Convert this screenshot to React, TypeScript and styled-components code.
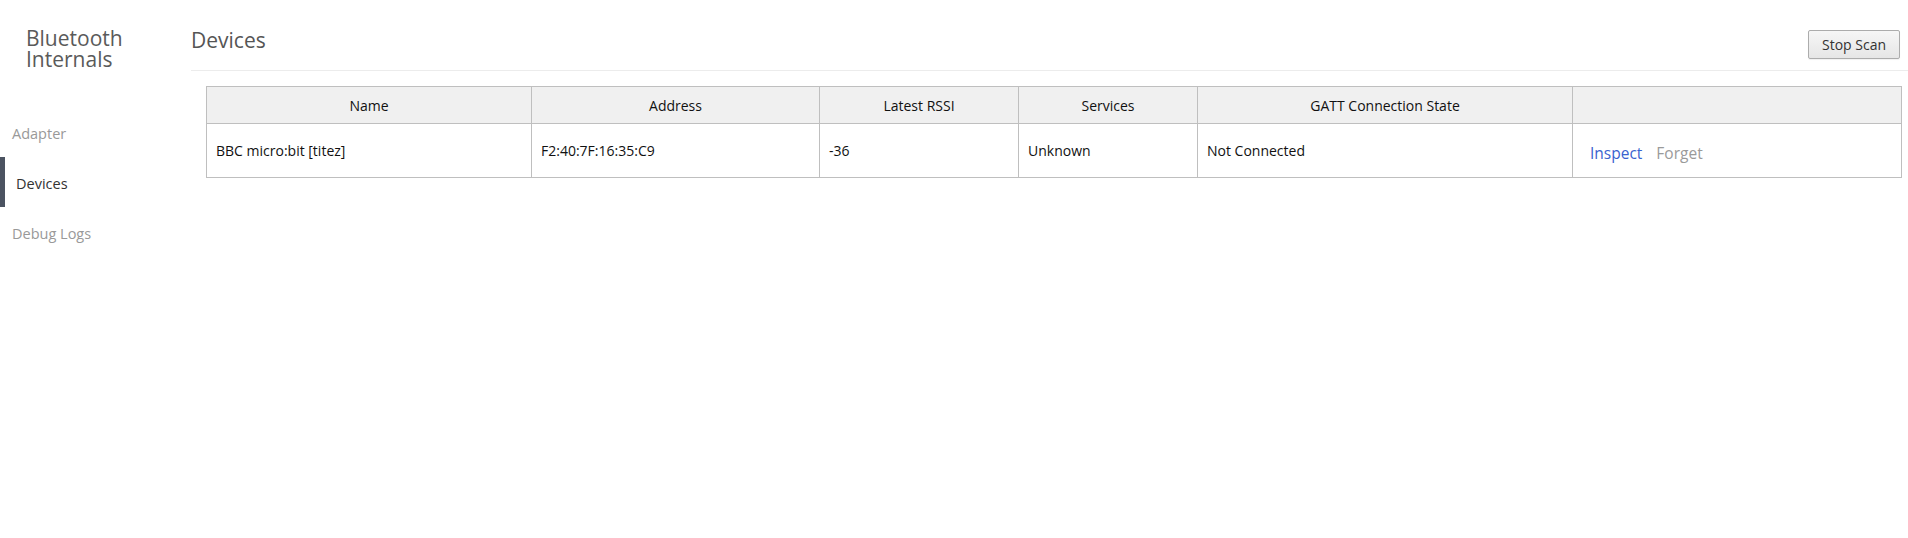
import { createGlobalStyle } from 'styled-components';
import styled from 'styled-components';

const GlobalStyle = createGlobalStyle`
  html, body {
    margin: 0;
    padding: 0;
    background: #fff;
    font-family: "Open Sans", "Noto Sans", sans-serif;
  }
`;

const Page = styled.div`
  display: flex;
  min-height: 538px;
`;

const Sidebar = styled.nav`
  width: 191px;
  flex-shrink: 0;
  padding-top: 28px;
  box-sizing: border-box;
`;

const AppTitle = styled.h1`
  margin: 0 0 37px 0;
  padding-left: 26px;
  font-size: 21px;
  font-weight: 400;
  line-height: 21px;
  color: #5a5a5a;
`;

const NavList = styled.ul`
  list-style: none;
  margin: 0;
  padding: 0;
`;

const NavItem = styled.li<{ $active?: boolean }>`
  height: 50px;
  padding-top: 4px;
  line-height: 46px;
  font-size: 14.5px;
  box-sizing: border-box;
  padding-left: ${(p) => (p.$active ? '11px' : '12px')};
  border-left: ${(p) => (p.$active ? '5px solid #4b5361' : 'none')};
  color: ${(p) => (p.$active ? '#333' : '#999')};
  cursor: pointer;
`;

const Main = styled.main`
  flex: 1;
  min-width: 0;
`;

const Header = styled.header`
  display: flex;
  justify-content: space-between;
  align-items: flex-start;
  height: 70px;
  padding-right: 8px;
  border-bottom: 1px solid #ececec;
`;

const PageTitle = styled.h2`
  margin: 0;
  padding-top: 26px;
  font-size: 21px;
  font-weight: 400;
  line-height: 28px;
  color: #555;
`;

const ScanButton = styled.button`
  margin-top: 30px;
  width: 92px;
  height: 29px;
  padding: 0;
  font-family: inherit;
  font-size: 14px;
  color: #333;
  background: linear-gradient(#f6f6f6, #e6e6e6);
  border: 1px solid #acacac;
  border-radius: 2px;
  box-shadow: 0 1px 1px rgba(0, 0, 0, 0.06);
  cursor: pointer;
`;

const Table = styled.table`
  margin: 15px 7px 0 15px;
  width: calc(100% - 22px);
  border-collapse: collapse;
  table-layout: fixed;
  border: 1px solid #bfbfbf;
  font-size: 14px;
  color: #111;
`;

const Th = styled.th`
  height: 36px;
  padding: 0 9px;
  background: #f0f0f0;
  border: 1px solid #bfbfbf;
  font-weight: 400;
  text-align: center;
`;

const Td = styled.td`
  height: 53px;
  padding: 0 9px;
  border: 1px solid #bfbfbf;
  text-align: left;
  vertical-align: middle;
`;

const ActionLink = styled.a<{ $muted?: boolean }>`
  display: inline-block;
  margin-left: ${(p) => (p.$muted ? '14px' : '8px')};
  padding-top: 4px;
  font-size: 15.5px;
  color: ${(p) => (p.$muted ? '#9a9a9a' : '#3a62cf')};
  text-decoration: none;
  cursor: pointer;
`;

const columns = [
  { label: 'Name', width: 325 },
  { label: 'Address', width: 288 },
  { label: 'Latest RSSI', width: 199 },
  { label: 'Services', width: 179 },
  { label: 'GATT Connection State', width: 375 },
  { label: '', width: 329 },
];

const devices = [
  {
    name: 'BBC micro:bit [titez]',
    address: 'F2:40:7F:16:35:C9',
    rssi: '-36',
    services: 'Unknown',
    state: 'Not Connected',
  },
];

export default function App() {
  return (
    <>
      <GlobalStyle />
      <Page>
        <Sidebar>
          <AppTitle>
            Bluetooth
            <br />
            Internals
          </AppTitle>
          <NavList>
            <NavItem>Adapter</NavItem>
            <NavItem $active>Devices</NavItem>
            <NavItem>Debug Logs</NavItem>
          </NavList>
        </Sidebar>
        <Main>
          <Header>
            <PageTitle>Devices</PageTitle>
            <ScanButton>Stop Scan</ScanButton>
          </Header>
          <Table>
            <colgroup>
              {columns.map((c, i) => (
                <col key={i} style={{ width: c.width }} />
              ))}
            </colgroup>
            <thead>
              <tr>
                {columns.map((c, i) => (
                  <Th key={i}>{c.label}</Th>
                ))}
              </tr>
            </thead>
            <tbody>
              {devices.map((d) => (
                <tr key={d.address}>
                  <Td>{d.name}</Td>
                  <Td>{d.address}</Td>
                  <Td>{d.rssi}</Td>
                  <Td>{d.services}</Td>
                  <Td>{d.state}</Td>
                  <Td>
                    <ActionLink>Inspect</ActionLink>
                    <ActionLink $muted>Forget</ActionLink>
                  </Td>
                </tr>
              ))}
            </tbody>
          </Table>
        </Main>
      </Page>
    </>
  );
}
